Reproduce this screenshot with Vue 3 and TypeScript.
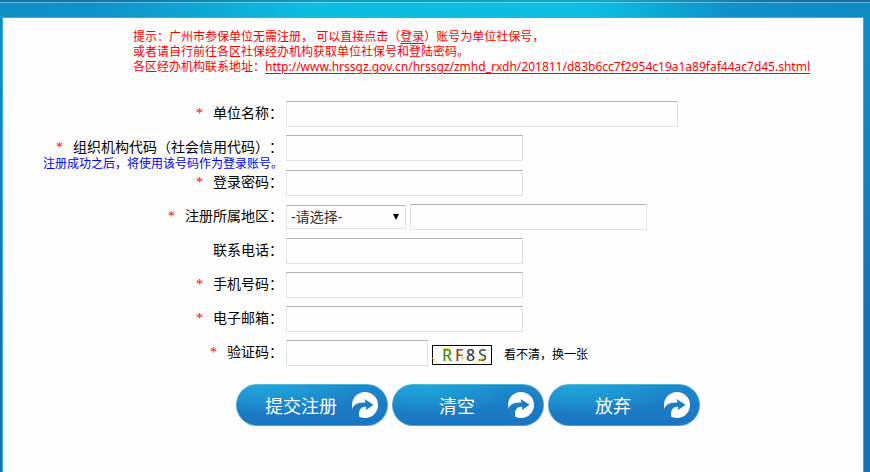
<script setup lang="ts">
import { reactive } from 'vue'

type FieldKey = 'company' | 'orgCode' | 'password' | 'district' | 'phone' | 'mobile' | 'email' | 'captcha'

interface Field {
  key: FieldKey
  label: string
  required: boolean
  size: 'wide' | 'normal' | 'short'
  type?: string
  hint?: string
}

const fields: Field[] = [
  { key: 'company', label: '单位名称：', required: true, size: 'wide' },
  {
    key: 'orgCode',
    label: '组织机构代码（社会信用代码）：',
    required: true,
    size: 'normal',
    hint: '注册成功之后，将使用该号码作为登录账号。',
  },
  { key: 'password', label: '登录密码：', required: true, size: 'normal', type: 'password' },
  { key: 'district', label: '注册所属地区：', required: true, size: 'normal' },
  { key: 'phone', label: '联系电话：', required: false, size: 'normal' },
  { key: 'mobile', label: '手机号码：', required: true, size: 'normal' },
  { key: 'email', label: '电子邮箱：', required: true, size: 'normal' },
  { key: 'captcha', label: '验证码：', required: true, size: 'short' },
]

const actions: { text: string; type: 'submit' | 'reset' | 'button' }[] = [
  { text: '提交注册', type: 'submit' },
  { text: '清空', type: 'reset' },
  { text: '放弃', type: 'button' },
]

const form = reactive<Record<FieldKey, string>>({
  company: '',
  orgCode: '',
  password: '',
  district: '',
  phone: '',
  mobile: '',
  email: '',
  captcha: '',
})

const guideUrl = 'http://www.hrssgz.gov.cn/hrssgz/zmhd_rxdh/201811/d83b6cc7f2954c19a1a89faf44ac7d45.shtml'
</script>

<template>
  <div class="page">
    <div class="topbar"></div>
    <main class="panel">
      <div class="notice">
        <p>提示：广州市参保单位无需注册， 可以直接点击（<a href="#login">登录</a>）账号为单位社保号，</p>
        <p>或者请自行前往各区社保经办机构获取单位社保号和登陆密码。</p>
        <p>各区经办机构联系地址：<a class="url" :href="guideUrl">{{ guideUrl }}</a></p>
      </div>

      <form @submit.prevent>
        <div v-for="f in fields" :key="f.key" class="row">
          <div class="caption">
            <label :for="f.key"><span v-if="f.required" class="star">*</span>{{ f.label }}</label>
            <p v-if="f.hint" class="hint">{{ f.hint }}</p>
          </div>
          <div class="control">
            <select v-if="f.key === 'district'" class="select" aria-label="地区">
              <option>-请选择-</option>
            </select>
            <input :id="f.key" v-model="form[f.key]" :type="f.type || 'text'" class="box" :class="f.size" />
            <template v-if="f.key === 'captcha'">
              <svg class="code" viewBox="0 0 60 20" width="60" height="20">
                <rect x="0.5" y="0.5" width="59" height="19" fill="#fff" stroke="#000" />
                <g fill="none" stroke="#f2dc50">
                  <path d="M0 13l7 6M9 3l11 1M25 5l6 10M42 19l8-6 4 6" />
                  <path d="M13 17l5-4M36 3l4 3" stroke="#f5ecb0" />
                </g>
                <g class="glyphs">
                  <text x="10" y="16" fill="#479022">R</text>
                  <text x="23" y="16" fill="#994052">F</text>
                  <text x="34" y="16" fill="#383e4a">8</text>
                  <text x="46" y="16" fill="#3c6233">S</text>
                </g>
                <path d="M27 8l5 6M47 17l4-5" stroke="#e8cc30" fill="none" />
              </svg>
              <a class="refresh" href="#captcha">看不清，换一张</a>
            </template>
          </div>
        </div>

        <div class="actions">
          <button v-for="a in actions" :key="a.text" :type="a.type" class="btn">
            <span>{{ a.text }}</span>
            <svg viewBox="0 0 26 26" width="26" height="26">
              <circle cx="13" cy="13" r="13" fill="#fff" />
              <path
                d="M0 18C1 13 5 10 13.500 10.500L12.500 7 21.500 12.700 14 18 14.200 14.700C9 14.500 6 17.500 7.500 26L3 25C2 23 0 21 0 18Z"
                fill="#1b7dc3"
              />
            </svg>
          </button>
        </div>
      </form>
    </main>
  </div>
</template>

<style>
body {
  margin: 0;
}
</style>

<style scoped>
* {
  box-sizing: border-box;
}

p {
  margin: 0;
}

.page {
  display: flex;
  flex-direction: column;
  min-height: 100vh;
  padding: 0 6px 0 2px;
  font-family: 'Liberation Sans', 'Noto Sans CJK SC', sans-serif;
  font-size: 14px;
  color: #000;
  text-spacing-trim: space-all;
  background:
    linear-gradient(180deg, transparent 40px, #1b6fb5 340px),
    linear-gradient(90deg, #0f8fc4 0%, #0e94c8 12%, #0cbedd 36%, #0cbfdf 68%, #0f91c5 84%, #0f8cc2 100%);
}

.topbar {
  height: 17px;
  margin: 0 -6px 0 -2px;
  background:
    linear-gradient(rgba(255, 255, 255, 0.35), rgba(255, 255, 255, 0.35)) 0 2px / 100% 1px no-repeat,
    linear-gradient(90deg, #186fa8 0%, #1579b0 15%, #109cc5 38%, #12a7c8 70%, #1971a9 88%, #196ba4 100%) 0 0 / 100% 2px no-repeat;
}

.panel {
  flex: 1;
  padding-top: 12px;
  background: #fefefe;
  border: solid #38b0d6;
  border-width: 1px 1px 0;
}

.notice {
  padding-left: 130px;
  font-size: 12px;
  line-height: 15px;
  color: #f00;
  white-space: nowrap;
}

.notice p {
  height: 15px;
}

.notice a {
  color: inherit;
  text-underline-offset: 2px;
}

.notice .url {
  font-family: 'Noto Sans', sans-serif;
  line-height: 1;
}

form {
  margin-top: 26px;
}

.row {
  display: flex;
  gap: 3px;
  min-height: 34px;
}

.caption {
  flex: 0 0 280px;
  line-height: 24px;
  text-align: right;
  white-space: nowrap;
}

.caption label {
  display: block;
  height: 24px;
}

.star {
  margin-right: 10px;
  font-family: 'Liberation Serif', serif;
  line-height: 1;
  color: #f00;
}

.hint {
  height: 11px;
  font-size: 12px;
  line-height: 11px;
  color: #00f;
}

.control {
  display: flex;
  align-items: center;
  gap: 4px;
  height: 26px;
}

.box,
.select {
  border: 1px solid #e3e3e3;
  border-top-color: #b2b2b2;
  border-radius: 0;
  background: #fefefe;
  font: inherit;
  outline: 0;
}

.box {
  width: 237px;
  height: 26px;
  padding: 0 4px;
}

.box.wide {
  width: 392px;
}

.box.short {
  width: 142px;
}

.select {
  width: 120px;
  height: 24px;
  padding: 0 4px;
  appearance: none;
  color: #333;
  background: #fefefe
    url("data:image/svg+xml,%3Csvg xmlns='http://www.w3.org/2000/svg' viewBox='0 0 6 6'%3E%3Cpath d='M0 0h6L3 6z'/%3E%3C/svg%3E")
    right 6px center / 6px 6px no-repeat;
}

.code {
  margin-top: 4px;
}

.glyphs {
  font-family: 'Noto Sans', sans-serif;
  font-size: 16px;
  font-weight: 500;
}

.refresh {
  margin-left: 8px;
  font-size: 12px;
  color: #000;
  text-decoration: none;
}

.actions {
  display: flex;
  gap: 4px;
  margin-top: 10px;
  padding-left: 233px;
}

.btn {
  display: flex;
  align-items: center;
  width: 152px;
  height: 42px;
  padding: 0 9px 0 13px;
  border: 1px solid #4aa0d4;
  border-top-color: #4bb5d2;
  border-radius: 21px;
  background:
    radial-gradient(ellipse 100px 30px at 30px 0, #20a6db, transparent),
    linear-gradient(#1b87cb, #1b74c0);
  font: inherit;
  font-size: 18px;
  color: #fff;
  cursor: pointer;
}

.btn span {
  flex: 1;
}
</style>
